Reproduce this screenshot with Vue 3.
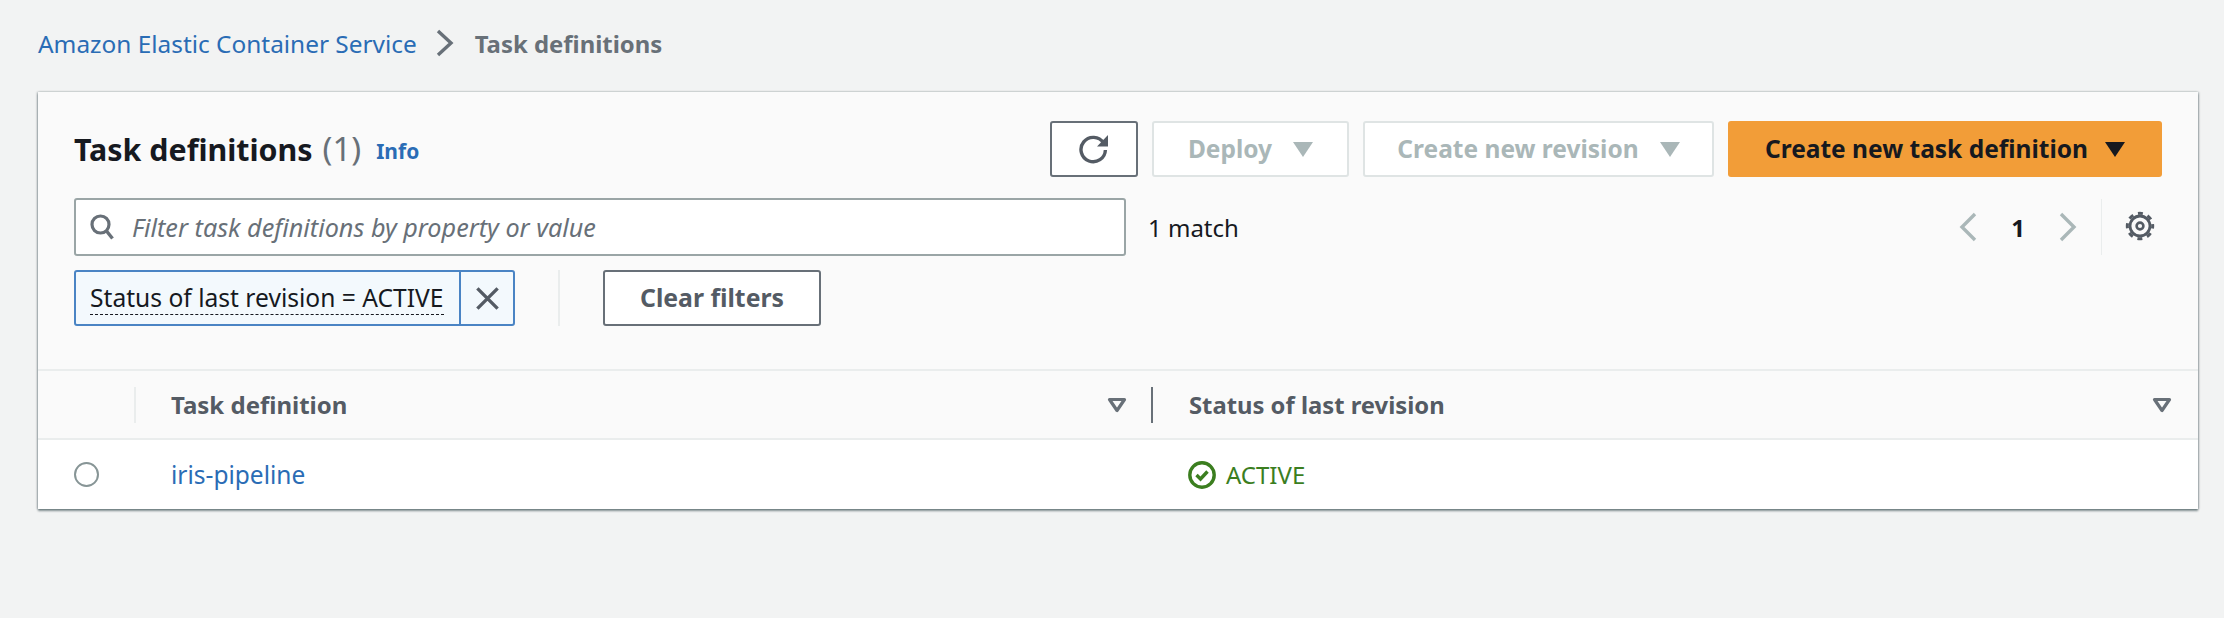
<script setup>
const title = 'Task definitions'
</script>

<template>
  <div class="page">
    <nav class="crumbs">
      <a class="link">Amazon Elastic Container Service</a>
      <svg class="crumb-sep" width="18" height="28" viewBox="0 0 18 28"><path d="M2 2l13 12L2 26" fill="none" stroke="#687078" stroke-width="3.4"/></svg>
      <span class="crumb-current">{{ title }}</span>
    </nav>
    <section class="card">
      <div class="head">
        <div class="row-top">
          <h1 class="title">{{ title }} <span class="count">(1)</span></h1>
          <a class="info">Info</a>
          <div class="actions">
            <button class="btn refresh">
              <svg width="32" height="30" viewBox="0 0 32 30"><path d="M25.500 9A12.200 12.200 0 1 0 27.400 16" fill="none" stroke="#545b64" stroke-width="3.400"/><path d="M30 1v11.500H19z" fill="#545b64"/></svg>
            </button>
            <button class="btn dis deploy">Deploy <i class="tri"></i></button>
            <button class="btn dis revision">Create new revision <i class="tri"></i></button>
            <button class="btn primary">Create new task definition <i class="tri dark"></i></button>
          </div>
        </div>
        <div class="row-filter">
          <div class="search">
            <svg width="24" height="26" viewBox="0 0 24 26"><circle cx="10.5" cy="10.5" r="8.5" fill="none" stroke="#687078" stroke-width="3.2"/><path d="M16.5 17l6 7.5" stroke="#687078" stroke-width="3.4" fill="none"/></svg>
            <span class="placeholder">Filter task definitions by property or value</span>
          </div>
          <span class="match">1 match</span>
          <div class="pager">
            <svg width="18" height="30" viewBox="0 0 18 30"><path d="M16 2L3 15l13 13" fill="none" stroke="#aab7b8" stroke-width="3.4"/></svg>
            <span class="page-no">1</span>
            <svg width="18" height="30" viewBox="0 0 18 30"><path d="M2 2l13 13L2 28" fill="none" stroke="#aab7b8" stroke-width="3.4"/></svg>
            <span class="pager-div"></span>
            <svg class="gear" width="30" height="30" viewBox="0 0 30 30">
              <circle cx="15" cy="15" r="10" fill="none" stroke="#545b64" stroke-width="2.800"/>
              <circle cx="15" cy="15" r="12.700" fill="none" stroke="#545b64" stroke-width="3" stroke-dasharray="5 4.980" stroke-dashoffset="2.500"/>
              <circle cx="15" cy="15" r="3.400" fill="none" stroke="#545b64" stroke-width="2.600"/>
            </svg>
          </div>
        </div>
        <div class="row-token">
          <div class="token">
            <span class="token-label"><span class="token-text">Status of last revision = ACTIVE</span></span>
            <span class="token-x">
              <svg width="27" height="27" viewBox="0 0 24 24"><path d="M3 3l18 18M21 3L3 21" stroke="#545b64" stroke-width="3" fill="none"/></svg>
            </span>
          </div>
          <span class="token-div"></span>
          <button class="btn clear">Clear filters</button>
        </div>
      </div>
      <div class="thead">
        <div class="c-sel"><span class="th-div"></span></div>
        <div class="c-name th">
          <span class="th-label">Task definition</span>
          <svg class="sort" width="20" height="16" viewBox="0 0 20 16"><path d="M2.500 2.500h15L10 13.500z" fill="none" stroke="#687078" stroke-width="3.200" stroke-linejoin="round"/></svg>
        </div>
        <span class="th-div dark"></span>
        <div class="c-status th">
          <span class="th-label">Status of last revision</span>
          <svg class="sort" width="20" height="16" viewBox="0 0 20 16"><path d="M2.500 2.500h15L10 13.500z" fill="none" stroke="#687078" stroke-width="3.200" stroke-linejoin="round"/></svg>
        </div>
      </div>
      <div class="tbody">
        <div class="c-sel"><span class="radio"></span></div>
        <div class="c-name"><a class="link">iris-pipeline</a></div>
        <div class="c-status2">
          <svg width="28" height="28" viewBox="0 0 28 28"><circle cx="14" cy="14" r="12.200" fill="none" stroke="#3b7e1f" stroke-width="3.400"/><path d="M8.500 14l4 4 7-7.500" fill="none" stroke="#3b7e1f" stroke-width="3.400"/></svg>
          <span class="active">ACTIVE</span>
        </div>
      </div>
    </section>
  </div>
</template>

<style>
html, body { margin: 0; background: #f2f3f3; }
</style>

<style scoped>
.page { height: 618px; box-sizing: border-box; padding: 29px 26px 0 38px; background: #f2f3f3; font-family: "Noto Sans", "Open Sans", sans-serif; color: #16191f; font-size: 24px; overflow: hidden; }
.crumbs { display: flex; align-items: center; height: 28px; font-size: 24.4px; }
.link { color: #2a6cb5; }
.crumb-sep { margin: 0 21px 0 19px; }
.crumb-current { color: #687078; font-weight: 700; font-size: 23.9px; }
.card { margin-top: 35px; height: 417px; box-sizing: border-box; background: #fff; box-shadow: 0 2px 2px rgba(0,28,36,.45), 1px 0 2px rgba(0,28,36,.25), -1px 0 2px rgba(0,28,36,.25); display: flex; flex-direction: column; }
.head { height: 279px; box-sizing: border-box; background: #fafafa; padding: 29px 36px 0 36px; border-bottom: 2px solid #eaeded; }
.row-top { display: flex; align-items: center; height: 56px; }
.title { margin: 0; font-size: 30.4px; font-weight: 700; line-height: 56px; }
.count { color: #687078; font-weight: 400; margin-left: 2px; font-size: 33px; }
.info { color: #2a6cb5; font-size: 21px; font-weight: 700; margin-left: 15px; margin-top: 3px; }
.actions { margin-left: auto; display: flex; gap: 14px; }
.btn { height: 56px; box-sizing: border-box; font: 700 24.5px "Noto Sans", sans-serif; border-radius: 3px; background: #fff; padding: 0 0 2px; display: flex; align-items: center; justify-content: center; }
.refresh { width: 88px; border: 2px solid #687078; padding: 0; }
.dis { border: 2px solid #dfe4e4; color: #aab7b8; gap: 21px; }
.deploy { width: 197px; }
.revision { width: 351px; }
.primary { width: 434px; border: 0; background: #f29d38; color: #16191f; gap: 17px; }
.tri { width: 0; height: 0; border-left: 10px solid transparent; border-right: 10px solid transparent; border-top: 15px solid #aab7b8; margin-top: 2px; }
.tri.dark { border-top-color: #16191f; }
.row-filter { display: flex; align-items: center; height: 58px; margin-top: 21px; }
.search { width: 1052px; height: 58px; box-sizing: border-box; border: 2px solid #9aa5a6; border-radius: 3px; background: #fff; display: flex; align-items: center; padding-left: 14px; gap: 18px; }
.placeholder { color: #687078; font-style: italic; font-size: 25.2px; }
.match { margin-left: 22px; }
.pager { margin-left: auto; display: flex; align-items: center; margin-right: 7px; height: 58px; }
.page-no { font-weight: 700; margin: 0 34px; font-size: 24px; }
.pager-div { width: 1px; height: 56px; background: #eaeded; margin: 0 23px 0 24px; }
.gear { margin-bottom: 2px; }
.row-token { display: flex; align-items: center; height: 56px; margin-top: 14px; }
.token { width: 441px; height: 56px; box-sizing: border-box; display: flex; border: 2px solid #4a84c4; border-radius: 3px; background: #f3f9fd; }
.token-label { width: 385px; box-sizing: border-box; padding-left: 14px; border-right: 2px solid #4a84c4; display: flex; align-items: center; font-size: 24.6px; white-space: nowrap; }
.token-text { border-bottom: 1px dashed #16191f; line-height: 28px; padding-bottom: 2px; margin-top: 3px; }
.token-x { flex: 1; display: flex; align-items: center; justify-content: center; }
.token-div { width: 2px; height: 56px; background: #eaeded; margin: 0 43px; }
.clear { width: 218px; border: 2px solid #687078; color: #545b64; font-size: 24.8px; }
.thead { height: 69px; background: #fafafa; border-bottom: 2px solid #eaeded; box-sizing: border-box; display: flex; align-items: center; }
.c-sel { width: 98px; height: 100%; display: flex; align-items: center; justify-content: flex-end; flex: none; }
.c-sel .radio { margin-right: 37px; }
.th-div { width: 2px; height: 36px; background: #eaeded; flex: none; }
.th-div.dark { background: #687078; }
.c-name { width: 1015px; padding-left: 35px; box-sizing: border-box; flex: none; }
.th { display: flex; align-items: center; justify-content: space-between; }
.th-label { color: #545b64; font-weight: 700; }
.c-status .th-label { font-size: 23.8px; }
.c-name.th { padding-right: 24px; }
.c-status { flex: 1; padding: 0 26px 0 36px; }
.sort { flex: none; }
.tbody { flex: 1; display: flex; align-items: center; background: #fff; }
.tbody .link { font-size: 24.5px; }
.radio { width: 25px; height: 25px; box-sizing: border-box; border: 2px solid #879596; border-radius: 50%; display: block; }
.c-status2 { display: flex; align-items: center; gap: 10px; padding-left: 37px; }
.active { color: #3b7e1f; }
</style>
